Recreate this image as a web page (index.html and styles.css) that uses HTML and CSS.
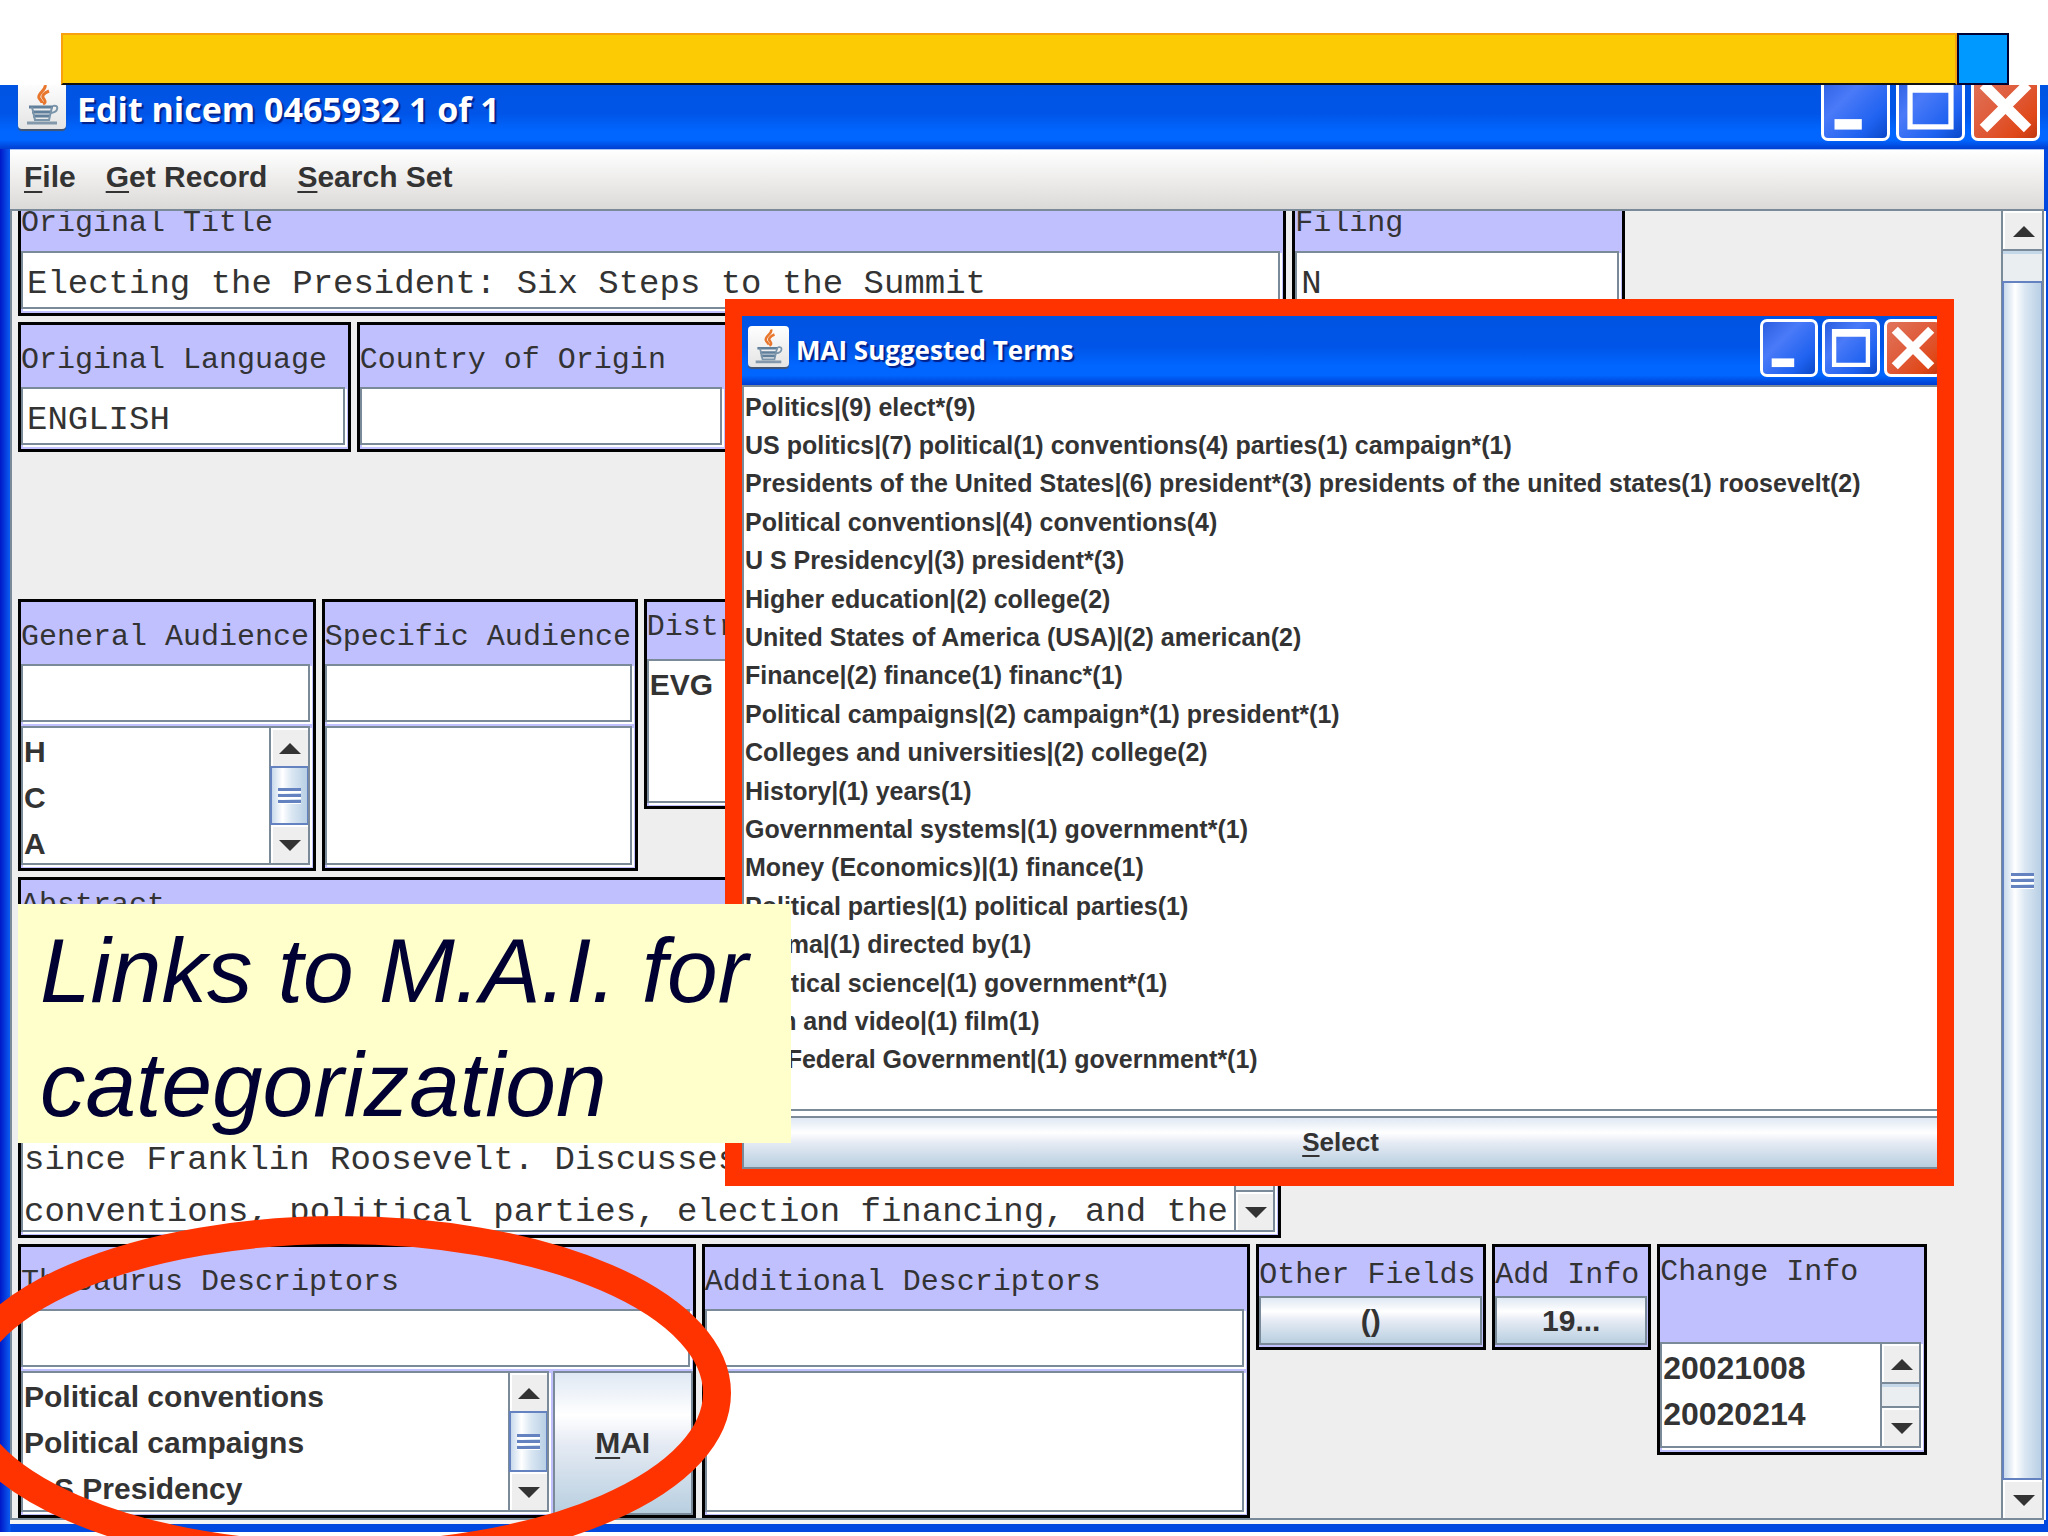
FILE: index.html
```html
<!DOCTYPE html>
<html lang="en">
<head>
    <meta charset="UTF-8">
    <meta name="viewport" content="width=device-width, initial-scale=1.0">
    <title>Edit nicem 0465932 1 of 1</title>
    <link rel="stylesheet" href="styles.css">
</head>
<body>
    <svg class="defs" aria-hidden="true">
        <symbol id="java" viewBox="0 0 48 48">
            <path d="M27 4c2 5-8 8-6 13 1 2 3 3 3 5M31 10c-5 2-8 5-5 8 2 3 1 4-1 5" fill="none" stroke="#e8762c" stroke-width="3"/>
            <path d="M11 26h24M14 31h19M15 35h17" fill="none" stroke="#5f7f9a" stroke-width="3"/>
            <path d="M14 26l3 13h14l3-13M35 25c6-2 6 6-2 7" fill="none" stroke="#7a94aa" stroke-width="2"/>
            <path d="M9 42h30" stroke="#8398aa" stroke-width="3"/>
        </symbol>
        <symbol id="min" viewBox="0 0 60 60"><path d="M10 42h26v10H10z" fill="#fff"/></symbol>
        <symbol id="max" viewBox="0 0 60 60"><path d="M8 8h44v44H8zM13 17v30h34V17z" fill="#fff" fill-rule="evenodd"/></symbol>
        <symbol id="close" viewBox="0 0 60 60"><path d="M9 9l42 42M51 9L9 51" stroke="#fff" stroke-width="10"/></symbol>
    </svg>

    <header class="slide-bar">
        <div class="slide-yellow"></div>
        <div class="slide-blue"></div>
    </header>

    <main class="window">
        <div class="titlebar">
            <svg class="java-icon"><use href="#java"/></svg>
            <h1>Edit nicem 0465932 1 of 1</h1>
            <button class="win-btn" aria-label="Minimize"><svg><use href="#min"/></svg></button>
            <button class="win-btn" aria-label="Maximize"><svg><use href="#max"/></svg></button>
            <button class="win-btn close" aria-label="Close"><svg><use href="#close"/></svg></button>
        </div>
        <nav class="menubar">
            <button><u>F</u>ile</button>
            <button><u>G</u>et Record</button>
            <button><u>S</u>earch Set</button>
        </nav>
        <div class="viewport">
            <form class="form">
                <div class="row row-title">
                    <div class="field cut">
                        <label for="title">Original Title</label>
                        <input type="text" id="title" value="Electing the President: Six Steps to the Summit">
                    </div>
                    <div class="field cut">
                        <label for="filing">Filing</label>
                        <input type="text" id="filing" value="N">
                    </div>
                </div>
                <div class="row row-language">
                    <div class="field">
                        <label for="language">Original Language</label>
                        <input type="text" id="language" value="ENGLISH">
                    </div>
                    <div class="field">
                        <label for="country">Country of Origin</label>
                        <input type="text" id="country">
                    </div>
                </div>
                <div class="row row-audience">
                    <div class="field">
                        <label for="general">General Audience</label>
                        <input type="text" id="general">
                        <div class="listbox">
                            <ul><li>H</li><li>C</li><li>A</li></ul>
                            <div class="scrollbar">
                                <button type="button" class="arrow up" aria-label="Up"></button>
                                <div class="thumb grip"></div>
                                <button type="button" class="arrow down" aria-label="Down"></button>
                            </div>
                        </div>
                    </div>
                    <div class="field">
                        <label for="specific">Specific Audience</label>
                        <input type="text" id="specific">
                        <div class="listbox"></div>
                    </div>
                    <div class="field distributor">
                        <label>Distributor</label>
                        <div class="listbox"><ul><li>EVG</li></ul></div>
                    </div>
                </div>
                <div class="row row-abstract">
                    <div class="field">
                        <label for="abstract">Abstract</label>
                        <div class="listbox textbox">
                            <textarea id="abstract">since Franklin Roosevelt. Discusses
conventions, political parties, election financing, and the</textarea>
                            <div class="scrollbar">
                                <button type="button" class="arrow up" aria-label="Up"></button>
                                <div class="track"></div>
                                <button type="button" class="arrow down" aria-label="Down"></button>
                            </div>
                        </div>
                    </div>
                </div>
                <div class="row row-descriptors">
                    <div class="field">
                        <label for="thesaurus">Thesaurus Descriptors</label>
                        <input type="text" id="thesaurus">
                        <div class="list-with-button">
                            <div class="listbox">
                                <ul><li>Political conventions</li><li>Political campaigns</li><li>U S Presidency</li></ul>
                                <div class="scrollbar">
                                    <button type="button" class="arrow up" aria-label="Up"></button>
                                    <div class="thumb grip"></div>
                                    <button type="button" class="arrow down" aria-label="Down"></button>
                                </div>
                            </div>
                            <button type="button" class="metal"><span><u>M</u>AI</span></button>
                        </div>
                    </div>
                    <div class="field">
                        <label for="additional">Additional Descriptors</label>
                        <input type="text" id="additional">
                        <div class="listbox"></div>
                    </div>
                    <div class="field small">
                        <label for="other">Other Fields</label>
                        <button type="button" class="metal" id="other">()</button>
                    </div>
                    <div class="field small">
                        <label for="addinfo">Add Info</label>
                        <button type="button" class="metal" id="addinfo">19...</button>
                    </div>
                    <div class="field change">
                        <label>Change Info</label>
                        <div class="listbox">
                            <ul><li>20021008</li><li>20020214</li></ul>
                            <div class="scrollbar">
                                <button type="button" class="arrow up" aria-label="Up"></button>
                                <div class="track"></div>
                                <button type="button" class="arrow down" aria-label="Down"></button>
                            </div>
                        </div>
                    </div>
                </div>
            </form>
            <div class="scrollbar main-scroll">
                <button type="button" class="arrow up" aria-label="Up"></button>
                <div class="track short"></div>
                <div class="thumb grip"></div>
                <button type="button" class="arrow down" aria-label="Down"></button>
            </div>
        </div>
    </main>

    <section class="dialog">
        <div class="titlebar">
            <svg class="java-icon"><use href="#java"/></svg>
            <h2>MAI Suggested Terms</h2>
            <button class="win-btn" aria-label="Minimize"><svg><use href="#min"/></svg></button>
            <button class="win-btn" aria-label="Maximize"><svg><use href="#max"/></svg></button>
            <button class="win-btn close" aria-label="Close"><svg><use href="#close"/></svg></button>
        </div>
        <ul class="terms">
            <li>Politics|(9) elect*(9)</li>
            <li>US politics|(7) political(1) conventions(4) parties(1) campaign*(1)</li>
            <li>Presidents of the United States|(6) president*(3) presidents of the united states(1) roosevelt(2)</li>
            <li>Political conventions|(4) conventions(4)</li>
            <li>U S Presidency|(3) president*(3)</li>
            <li>Higher education|(2) college(2)</li>
            <li>United States of America (USA)|(2) american(2)</li>
            <li>Finance|(2) finance(1) financ*(1)</li>
            <li>Political campaigns|(2) campaign*(1) president*(1)</li>
            <li>Colleges and universities|(2) college(2)</li>
            <li>History|(1) years(1)</li>
            <li>Governmental systems|(1) government*(1)</li>
            <li>Money (Economics)|(1) finance(1)</li>
            <li>Political parties|(1) political parties(1)</li>
            <li>Drama|(1) directed by(1)</li>
            <li>Political science|(1) government*(1)</li>
            <li>Film and video|(1) film(1)</li>
            <li>US Federal Government|(1) government*(1)</li>
        </ul>
        <button class="metal select"><span><u>S</u>elect</span></button>
    </section>

    <p class="note">Links to M.A.I. for categorization</p>

    <svg class="oval" viewBox="0 0 731 321" aria-hidden="true">
        <ellipse cx="340" cy="178" rx="377" ry="163" fill="none" stroke="#ff3300" stroke-width="28"/>
    </svg>
</body>
</html>
```
FILE: styles.css
```css
* {
    box-sizing: border-box;
}

body {
    margin: 0;
    min-height: 100vh;
    padding-bottom: 5px;
    display: flex;
    flex-direction: column;
    position: relative;
    overflow: hidden;
    background: #fff;
    color: #333;
    font-family: "Liberation Sans", Arial, sans-serif;
    font-size: 30px;
    font-weight: bold;
}

ul, h1, h2, p {
    margin: 0;
    padding: 0;
    list-style: none;
}

button {
    font: inherit;
    color: inherit;
    padding: 0;
    border: none;
}

u {
    text-underline-offset: 4px;
    text-decoration-thickness: 2px;
}

.defs {
    display: none;
}

/* slide header */
.slide-bar {
    display: flex;
    height: 85px;
    padding: 33px 39px 0 61px;
}

.slide-yellow {
    flex: 1;
    background: #fdcb04;
    border: 2px solid #f7a010;
    border-bottom-color: #111;
}

.slide-blue {
    width: 52px;
    background: #0099ff;
    border: 2px solid #000033;
}

/* main window */
.window {
    flex: 1;
    display: flex;
    flex-direction: column;
    padding: 0 4px 10px 10px;
    background: linear-gradient(90deg, #0018c8, #0a5cf0 10px, #0048e0 11px);
}

.titlebar {
    display: flex;
    align-items: flex-end;
    overflow: hidden;
    height: 64px;
    gap: 6px;
    margin: 0 -4px 0 -10px;
    padding: 0 8px 8px 18px;
    color: #fff;
    background: linear-gradient(#0054e3, #0055e8 45%, #0066ff 72%, #0066ff 86%, #003dd0);
}

.titlebar h1, .titlebar h2 {
    flex: 1;
    font-family: "Open Sans", sans-serif;
    font-size: 34px;
    line-height: 40px;
    text-shadow: 2px 2px 1px #00208a;
}

.titlebar h1 {
    padding: 0 0 12px 5px;
}

.java-icon {
    width: 48px;
    height: 48px;
    margin-bottom: 12px;
    border-radius: 4px;
    background: linear-gradient(#fff, #e4e4e4);
    box-shadow: 0 2px 1px #46566e;
}

.win-btn {
    flex: none;
    width: 69px;
    height: 69px;
    border: 3px solid #fff;
    border-radius: 7px;
    background: linear-gradient(135deg, #2a5ee0, #4a7af8 35%, #1f62f0 75%, #0a48c8);
}

.win-btn svg {
    display: block;
    width: 100%;
    height: 100%;
}

.win-btn.close {
    background: linear-gradient(135deg, #e0745c, #df5a38 50%, #e04818 80%, #c03810);
}

.menubar {
    display: flex;
    gap: 30px;
    height: 62px;
    padding: 0 14px 6px;
    background: linear-gradient(#fff, #dcdad8);
    border-top: 1px solid #a8c4f4;
    border-bottom: 2px solid #7a8a99;
}

.menubar button {
    background: none;
}

.viewport {
    flex: 1;
    display: flex;
    background: #eee;
    border: 2px solid #7a8a99;
    border-top: none;
    box-shadow: 0 4px 0 #f4f4f4, 2px 0 0 #fff;
    margin-bottom: 2px;
}

/* record form */
.form {
    flex: 1;
    padding: 0 0 0 6px;
}

.row {
    display: grid;
    gap: 6px;
    align-items: start;
    margin-bottom: 6px;
}

.row-title {
    grid-template-columns: 1269fr 333fr 370fr;
}

.row-language {
    grid-template-columns: 333fr 371fr 1268fr;
    margin-bottom: 147px;
}

.row-audience {
    grid-template-columns: 298fr 316fr 320fr 1032fr;
}

.row-abstract {
    grid-template-columns: 1264fr 714fr;
}

.row-descriptors {
    grid-template-columns: 678fr 549fr 230fr 159fr 270fr 68fr;
    margin-bottom: 0;
}

.field {
    min-width: 0;
    border: 3px solid #000;
    background: #c0c0ff;
    overflow: hidden;
}

.field label {
    display: block;
    height: 62px;
    line-height: 70px;
    white-space: nowrap;
    font-family: "Liberation Mono", "Courier New", monospace;
    font-size: 30px;
    font-weight: normal;
}

.field.cut {
    border-top: none;
}

.field.cut label {
    height: 40px;
    line-height: 24px;
}

.field input {
    display: block;
    width: calc(100% - 3px);
    height: 58px;
    margin-bottom: 4px;
    padding: 8px 4px 0;
    border: 2px solid #7a8a99;
    border-radius: 0;
    background: #fff;
    box-shadow: 2px 2px 0 #fff;
    color: #333;
    font-family: "Liberation Mono", "Courier New", monospace;
    font-size: 34px;
}

.listbox {
    display: flex;
    width: calc(100% - 3px);
    height: 141px;
    margin-bottom: 3px;
    overflow: hidden;
    background: #fff;
    border: 2px solid #7a8a99;
    box-shadow: 2px 2px 0 #fff;
}

.row-audience .listbox {
    height: 139px;
}

.listbox ul {
    flex: 1;
    padding: 1px 0 0 1px;
    line-height: 46px;
    white-space: nowrap;
}

.row-audience .distributor label {
    height: 57px;
    line-height: 50px;
}

.row-audience .distributor .listbox {
    height: 144px;
}

.row-abstract label {
    line-height: 50px;
}

.textbox {
    height: 290px;
}

.textbox textarea {
    flex: 1;
    min-width: 0;
    padding: 190px 0 0 1px;
    border: none;
    resize: none;
    overflow: hidden;
    white-space: pre;
    background: #fff;
    color: #333;
    font-family: "Liberation Mono", "Courier New", monospace;
    font-size: 34px;
    line-height: 52px;
}

.list-with-button {
    display: flex;
    gap: 4px;
}

.list-with-button .listbox {
    flex: 1;
}

.list-with-button .metal {
    width: 140px;
}

.small label {
    height: 49px;
    line-height: 56px;
}

.small .metal {
    display: block;
    width: calc(100% - 1px);
    height: 49px;
    margin-bottom: 2px;
}

.change label {
    height: 95px;
    line-height: 50px;
}

.change .listbox {
    height: 106px;
    margin-bottom: 4px;
    font-size: 32px;
}

.metal {
    border: 2px solid #7a8a99;
    background: linear-gradient(#dfe8f3, #fff 30%, #e6ebf4 50%, #b8cfe0);
}

/* scrollbars */
.scrollbar {
    flex: none;
    display: flex;
    flex-direction: column;
    width: 39px;
    border-left: 2px solid #7a8a99;
}

.arrow {
    flex: none;
    height: 38px;
    display: flex;
    align-items: center;
    justify-content: center;
    background: #eee;
    border-left: 2px solid #fff;
    border-top: 2px solid #fff;
}

.arrow::before {
    content: "";
    border: 11px solid transparent;
}

.arrow.up::before {
    border-top: none;
    border-bottom-color: #333;
}

.arrow.down::before {
    border-bottom: none;
    border-top-color: #333;
}

.track {
    flex: 1;
    background: #eaeef0;
    border-top: 2px solid #7a8a99;
    border-bottom: 2px solid #7a8a99;
    box-shadow: inset 0 3px 0 #c4d8ea;
}

.track.short {
    flex: none;
    height: 32px;
    border-bottom: none;
}

.thumb {
    flex: 1;
    display: flex;
    align-items: center;
    justify-content: center;
    border: 2px solid #6382bf;
    border-right-width: 1px;
    margin-left: -1px;
    background: linear-gradient(90deg, #c8d9ec, #fff 30%, #dce8f3 55%, #b8cfe5);
}

.grip::before {
    content: "";
    width: 23px;
    height: 16px;
    background: repeating-linear-gradient(#6382bf 0 3px, #fff 3px 5px, transparent 5px 6px);
}

.main-scroll {
    width: 41px;
}

/* suggested terms dialog */
.dialog {
    position: absolute;
    top: 299px;
    left: 725px;
    right: 94px;
    display: flex;
    flex-direction: column;
    border: 17px solid #ff3300;
    background: #fff;
}

.dialog .titlebar {
    height: 69px;
    gap: 4px;
    margin: 0;
    padding: 0 0 8px 6px;
}

.dialog .titlebar h2 {
    font-size: 26px;
    padding: 0 0 7px 3px;
}

.dialog .java-icon {
    width: 41px;
    height: 41px;
    margin-bottom: 10px;
}

.dialog .win-btn {
    width: 58px;
    height: 58px;
}

.dialog .close {
    margin-right: -5px;
}

.terms {
    display: grid;
    grid-auto-rows: 1fr;
    align-items: center;
    height: 726px;
    padding: 1px 0 30px 1px;
    border: 2px solid #7a8a99;
    border-right: none;
    font-size: 25px;
    white-space: nowrap;
}

.select {
    height: 53px;
    margin-top: 5px;
    border-right: none;
    font-size: 26px;
}

/* annotations */
.note {
    position: absolute;
    top: 904px;
    left: 18px;
    width: 773px;
    padding: 10px 20px 0 22px;
    height: 239px;
    background: #ffffcc;
    color: #000033;
    font-size: 91px;
    font-style: italic;
    font-weight: normal;
    line-height: 114px;
}

.oval {
    position: absolute;
    top: 1215px;
    left: 0;
    width: 731px;
    height: 321px;
}
```
